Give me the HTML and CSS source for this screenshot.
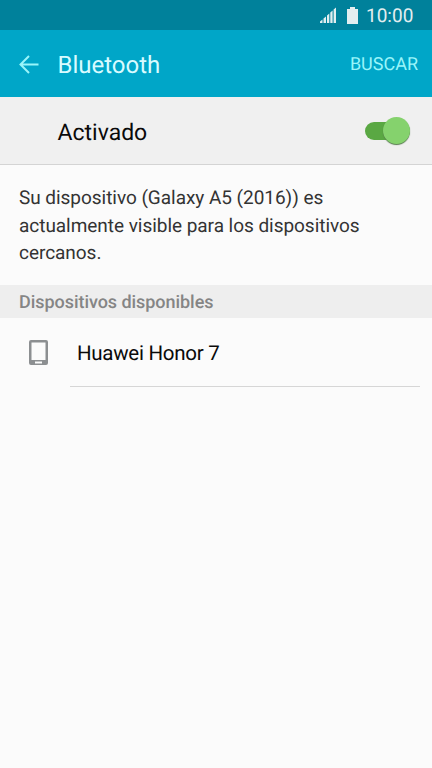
FILE: index.html
```html
<!DOCTYPE html>
<html lang="es">
<head>
<meta charset="utf-8">
<title>Bluetooth</title>
<link rel="stylesheet" href="styles.css">
</head>
<body>
<div class="status">
  <svg class="signal" width="17" height="17" viewBox="0 0 17 17"><path d="M0 14.500L2.500 12.500V16H0zM3.500 11.500L6 9.500V16H3.500zM7 8.500L9.300 6.500V16H7zM10.300 5.500L12.600 3.500V16h-2.300zM13.600 2.500L16 0.500V16h-2.400z"/></svg>
  <svg class="battery" width="11" height="17" viewBox="0 0 11 17"><path d="M3 0h5v2h3v15H0V2h3z"/></svg>
  <span class="clock">10:00</span>
</div>
<header class="bar">
  <svg class="back" width="20" height="20" viewBox="0 0 20 20"><path d="M19.500 9.500H2M10 1L1.500 9.500L10 18"/></svg>
  <h1 class="title">Bluetooth</h1>
  <span class="action">BUSCAR</span>
</header>
<section class="toggle-row">
  <span class="toggle-label">Activado</span>
  <span class="switch"><span class="knob"></span></span>
</section>
<p class="info">Su dispositivo (Galaxy A5 (2016)) es<br>actualmente visible para los dispositivos<br>cercanos.</p>
<h2 class="section">Dispositivos disponibles</h2>
<div class="device">
  <svg class="phone" width="19" height="25" viewBox="0 0 19 25"><path fill-rule="evenodd" d="M2 0h15a2 2 0 0 1 2 2v21a2 2 0 0 1-2 2H2a2 2 0 0 1-2-2V2a2 2 0 0 1 2-2zM2.500 2.500V20h14V2.500zM6 21.500v2h7v-2z"/></svg>
  <span class="device-name">Huawei Honor 7</span>
</div>
</body>
</html>
```
FILE: styles.css
```css
* { box-sizing: border-box; }
body { margin: 0; width: 432px; height: 768px; overflow: hidden; background: #fbfbfb; font-family: Roboto, sans-serif; color: #0a0a0a; text-rendering: geometricPrecision; }
.status { height: 30px; background: #00819b; display: flex; align-items: center; padding: 0 18px 0 320px; }
.signal, .battery { fill: #e3eef0; }
.battery { margin-left: 10px; }
.clock { margin-left: 8px; color: #e3eef0; font-size: 19px; line-height: 30px; padding-top: 1px; }
.bar { height: 67px; background: #00a6c8; display: flex; align-items: center; padding: 2px 14px 0 19px; }
.back { fill: none; stroke: #99f5fa; stroke-width: 2; }
.title { margin: 0 0 0 18.5px; font-size: 24px; font-weight: 400; color: #d9fbff; }
.action { margin-left: auto; font-size: 18px; color: #99f5fa; }
.toggle-row { height: 68px; background: #f0f0f0; border-bottom: 1px solid #d4d4d4; display: flex; align-items: center; justify-content: space-between; padding: 0 22px 0 57.5px; }
.toggle-label { font-size: 23px; padding-top: 3px; }
.switch { width: 45px; height: 18px; border-radius: 9px; background: #5aa843; display: flex; align-items: center; justify-content: flex-end; }
.knob { width: 27px; height: 27px; flex: none; border-radius: 50%; background: #85d26d; box-shadow: 0 1px 1px #557a4c; }
.info { margin: 0; padding: 19px 19px 0; height: 120px; font-size: 19px; line-height: 27.5px; letter-spacing: -0.04px; color: #333; white-space: nowrap; }
.section { margin: 0; height: 33px; background: #eee; padding-left: 19px; font-size: 18px; line-height: 35px; font-weight: 500; letter-spacing: -0.05px; color: #858585; }
.device { height: 69px; display: flex; align-items: center; padding-left: 29px; background: linear-gradient(#d6d6d6, #d6d6d6) 70px 100% / 350px 1px no-repeat; }
.phone { fill: #8c8f91; }
.device-name { margin-left: 29px; font-size: 20.5px; letter-spacing: -0.28px; padding-top: 2px; }
```
